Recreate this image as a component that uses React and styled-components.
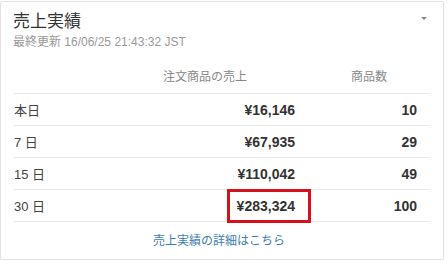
import styled, { createGlobalStyle } from "styled-components";

const GlobalStyle = createGlobalStyle`
  body {
    margin: 0;
    background: #fff;
    font-family: "Liberation Sans", "Noto Sans CJK JP", sans-serif;
  }
`;

const rows = [
  { label: "本日", amount: "¥16,146", count: "10" },
  { label: "7 日", amount: "¥67,935", count: "29" },
  { label: "15 日", amount: "¥110,042", count: "49" },
  { label: "30 日", amount: "¥283,324", count: "100", marked: true },
];

const App = () => {
  return (
    <>
      <GlobalStyle />
      <Card>
        <CardHeader>
          <div>
            <Title>売上実績</Title>
            <Updated>最終更新 16/06/25 21:43:32 JST</Updated>
          </div>
          <Caret />
        </CardHeader>
        <Table>
          <HeadRow>
            <span />
            <HeadCell $pad={48}>注文商品の売上</HeadCell>
            <HeadCell $pad={30}>商品数</HeadCell>
          </HeadRow>
          {rows.map((r) => (
            <Row key={r.label}>
              <Label>{r.label}</Label>
              <Value>
                {r.marked ? <Marked>{r.amount}</Marked> : r.amount}
              </Value>
              <Value>{r.count}</Value>
            </Row>
          ))}
        </Table>
        <Footer>
          <MoreLink href="#">売上実績の詳細はこちら</MoreLink>
        </Footer>
      </Card>
    </>
  );
};

const Card = styled.div`
  box-sizing: border-box;
  width: 444px;
  margin-top: 1px;
  background: #fff;
  border: 1px solid #e2e2e2;
  border-radius: 2px;
  box-shadow: 0 1px 2px rgba(0, 0, 0, 0.06);
`;

const CardHeader = styled.div`
  display: flex;
  justify-content: space-between;
  align-items: flex-start;
  padding: 10px 16px 0 12px;
`;

const Title = styled.div`
  font-size: 17px;
  line-height: 20px;
  color: #333;
`;

const Updated = styled.div`
  margin-top: 2px;
  font-size: 12px;
  line-height: 16px;
  color: #999;
`;

const Caret = styled.span`
  margin-top: 5px;
  width: 0;
  height: 0;
  border-left: 3px solid transparent;
  border-right: 3px solid transparent;
  border-top: 3px solid #888;
`;

const Table = styled.div`
  margin: 19px 13px 0;
`;

const grid = `
  display: grid;
  grid-template-columns: 1fr 150px 122px;
  padding-right: 13px;
  border-bottom: 1px solid #e8e8e8;
`;

const HeadRow = styled.div`
  ${grid}
  padding-bottom: 8px;
  line-height: 16px;
`;

const HeadCell = styled.span`
  text-align: right;
  padding-right: ${(p) => p.$pad}px;
  font-size: 12px;
  color: #888;
`;

const Row = styled.div`
  ${grid}
  height: 31px;
  align-items: center;
`;

const Label = styled.span`
  font-size: 13px;
  color: #444;
`;

const Value = styled.span`
  text-align: right;
  font-size: 14px;
  font-weight: bold;
  color: #333;
`;

const Marked = styled.span`
  position: relative;
  &::after {
    content: "";
    position: absolute;
    top: -9px;
    bottom: -9px;
    left: -10px;
    right: -16px;
    border: 3px solid #d3121b;
  }
`;

const Footer = styled.div`
  padding: 10px 0;
  text-align: center;
  line-height: 16px;
`;

const MoreLink = styled.a`
  font-size: 12px;
  color: #3b7cb3;
  text-decoration: none;
  margin-left: -6px;
`;

export default App;
